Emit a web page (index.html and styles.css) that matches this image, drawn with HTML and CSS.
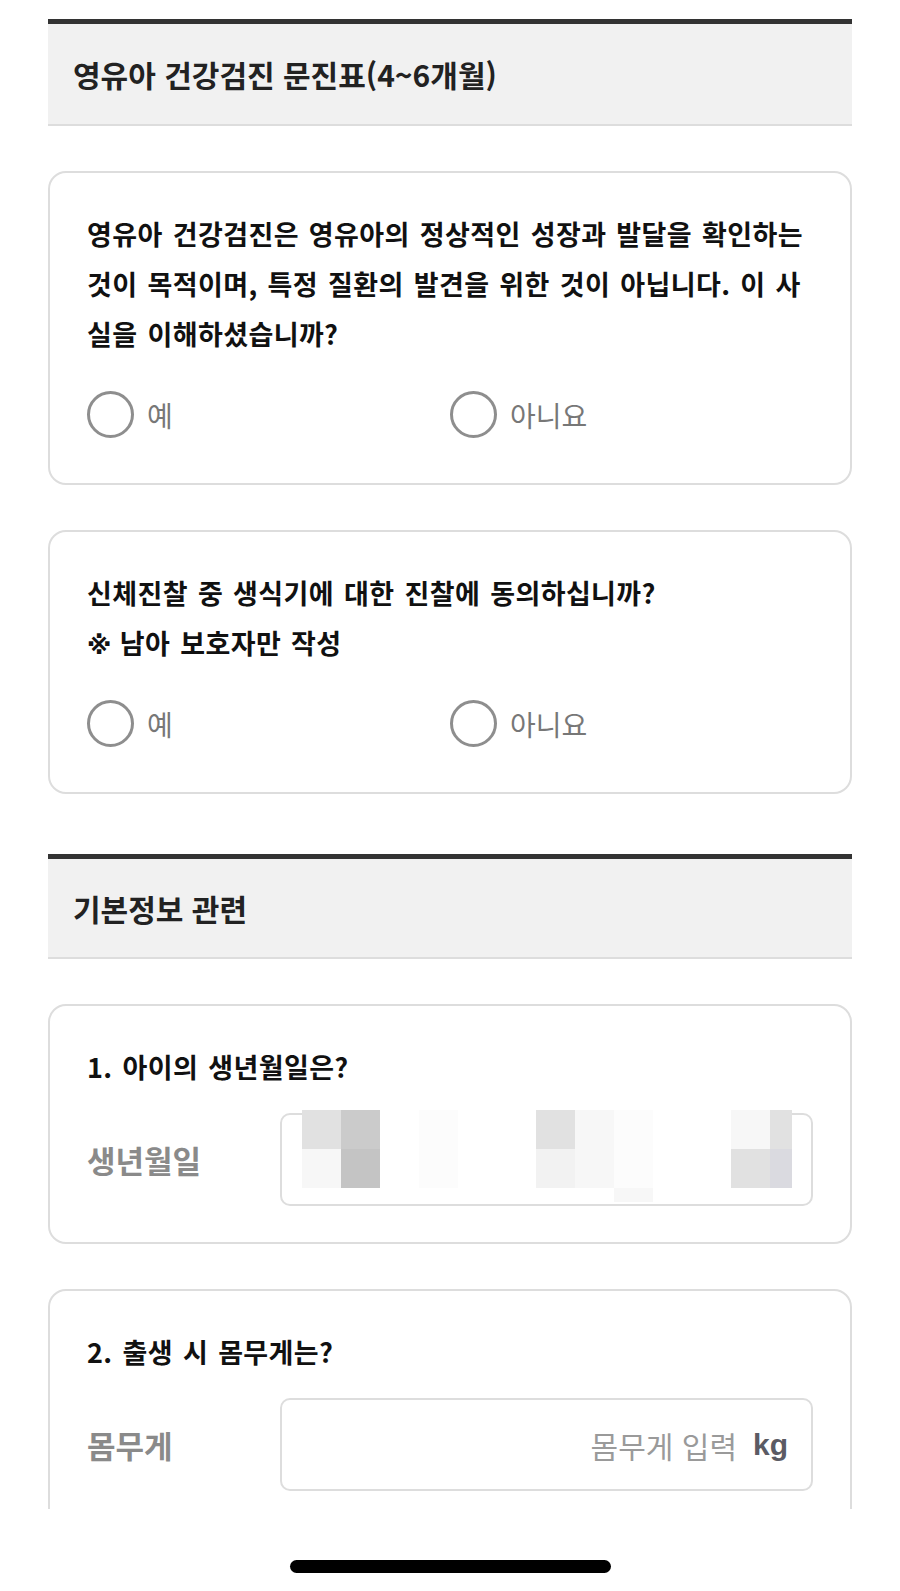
FILE: index.html
```html
<!DOCTYPE html>
<html lang="ko">
<head>
  <meta charset="UTF-8">
  <meta name="viewport" content="width=device-width, initial-scale=1.0">
  <title>영유아 건강검진 문진표</title>
  <link rel="stylesheet" href="styles.css">
</head>
<body>
  <div class="screen">
    <main class="content">
      <!-- 문진표 안내 -->
      <section class="section">
        <h2 class="section-title">영유아 건강검진 문진표(4~6개월)</h2>

        <div class="card">
          <p class="question">영유아 건강검진은 영유아의 정상적인 성장과 발달을 확인하는 것이 목적이며, 특정 질환의 발견을 위한 것이 아닙니다. 이 사실을 이해하셨습니까?</p>
          <div class="choices">
            <label class="choice"><span class="radio"></span><span class="choice-text">예</span></label>
            <label class="choice"><span class="radio"></span><span class="choice-text">아니요</span></label>
          </div>
        </div>

        <div class="card">
          <p class="question">신체진찰 중 생식기에 대한 진찰에 동의하십니까?<br><span class="mark">※</span>남아 보호자만 작성</p>
          <div class="choices">
            <label class="choice"><span class="radio"></span><span class="choice-text">예</span></label>
            <label class="choice"><span class="radio"></span><span class="choice-text">아니요</span></label>
          </div>
        </div>
      </section>

      <!-- 기본정보 -->
      <section class="section">
        <h2 class="section-title">기본정보 관련</h2>

        <div class="card">
          <p class="question">1. 아이의 생년월일은?</p>
          <div class="field">
            <span class="field-label">생년월일</span>
            <div class="field-input">
              <div class="mosaic">
                <i class="m1"></i><i class="m2"></i><i></i><i class="m5"></i><i></i><i></i><i class="m1"></i><i class="m4"></i><i class="m5"></i><i></i><i></i><i class="m4"></i><i class="m1"></i>
                <i class="m4"></i><i class="m3"></i><i></i><i class="m5"></i><i></i><i></i><i class="m6"></i><i class="m4"></i><i class="m5"></i><i></i><i></i><i class="m1"></i><i class="m7"></i>
                <i></i><i></i><i></i><i></i><i></i><i></i><i></i><i></i><i class="m4"></i><i></i><i></i><i></i><i></i>
              </div>
            </div>
          </div>
        </div>

        <div class="card">
          <p class="question">2. 출생 시 몸무게는?</p>
          <div class="field">
            <span class="field-label">몸무게</span>
            <div class="field-input">
              <span class="placeholder">몸무게 입력</span>
              <span class="unit">kg</span>
            </div>
          </div>
        </div>
      </section>
    </main>

    <div class="home-bar">
      <span class="home-indicator"></span>
    </div>
  </div>
</body>
</html>
```

FILE: styles.css
```css
body {
  margin: 0;
  background: #fff;
  font-family: "Noto Sans CJK KR", "Noto Sans", sans-serif;
  color: #111;
}
.screen {
  width: 900px;
  height: 1591px;
  overflow: hidden;
}
.content {
  height: 1509px;
  overflow: hidden;
  box-sizing: border-box;
  padding: 19px 48px 0;
}
.section + .section {
  margin-top: 60px;
}

/* 섹션 제목 */
.section-title {
  margin: 0;
  height: 100px;
  box-sizing: content-box;
  display: flex;
  align-items: center;
  padding-left: 25px;
  background: #f1f1f1;
  border-top: 5px solid #333;
  border-bottom: 2px solid #ddd;
  font-size: 30px;
  font-weight: 700;
  color: #222;
}
.section + .section .section-title {
  height: 98px;
}

/* 질문 카드 */
.card {
  margin-top: 45px;
  padding: 36px 33px 45px 37px;
  border: 2px solid #ddd;
  border-radius: 18px;
  background: #fff;
}
.question {
  margin: 0;
  font-size: 27px;
  font-weight: 700;
  line-height: 50px;
  letter-spacing: 0.4px;
  word-spacing: 2px;
  color: #111;
}
.mark {
  font-family: "DejaVu Sans", sans-serif;
  font-size: 25px;
  font-weight: 700;
  line-height: 1;
  margin-right: 8px;
}
.choices {
  display: grid;
  grid-template-columns: 363px 1fr;
  margin-top: 32px;
}
.choice {
  display: flex;
  align-items: center;
  gap: 13px;
  height: 47px;
}
.radio {
  width: 47px;
  height: 47px;
  box-sizing: border-box;
  border: 3px solid #8e8e8e;
  border-radius: 50%;
  background: #fff;
}
.choice-text {
  font-size: 28px;
  line-height: 1;
  color: #777;
}

/* 입력 항목 */
.card:has(.field) {
  padding-bottom: 36px;
}
.field {
  display: flex;
  align-items: center;
  margin-top: 21px;
  margin-right: 4px;
}
.field-label {
  width: 193px;
  flex-shrink: 0;
  font-size: 31px;
  font-weight: 700;
  color: #8a8a8a;
}
.field-input {
  position: relative;
  flex: 1;
  height: 93px;
  box-sizing: border-box;
  display: flex;
  align-items: center;
  justify-content: flex-end;
  gap: 16px;
  padding: 0 23px;
  border: 2px solid #ddd;
  border-radius: 10px;
}
.placeholder {
  font-size: 30px;
  color: #9a9a9a;
}
.unit {
  font-family: "Liberation Sans", Arial, sans-serif;
  font-size: 30px;
  font-weight: 700;
  color: #5b5b64;
}

/* 생년월일 가림 처리 */
.mosaic {
  position: absolute;
  left: 20px;
  top: -5px;
  width: 490px;
  display: grid;
  grid-template-columns: repeat(13, 39px);
  grid-template-rows: 39px 39px 14px;
  overflow: hidden;
}
.mosaic i {
  background: #fff;
}
.mosaic .m1 { background: #e1e1e1; }
.mosaic .m2 { background: #cbcbcb; }
.mosaic .m3 { background: #c4c4c4; }
.mosaic .m4 { background: #f7f7f7; }
.mosaic .m5 { background: #fcfcfc; }
.mosaic .m6 { background: #f2f2f2; }
.mosaic .m7 { background: #dadae0; }

/* 홈 인디케이터 */
.home-bar {
  height: 82px;
  display: flex;
  justify-content: center;
}
.home-indicator {
  width: 321px;
  height: 13px;
  margin-top: 51px;
  border-radius: 7px;
  background: #000;
}
```
